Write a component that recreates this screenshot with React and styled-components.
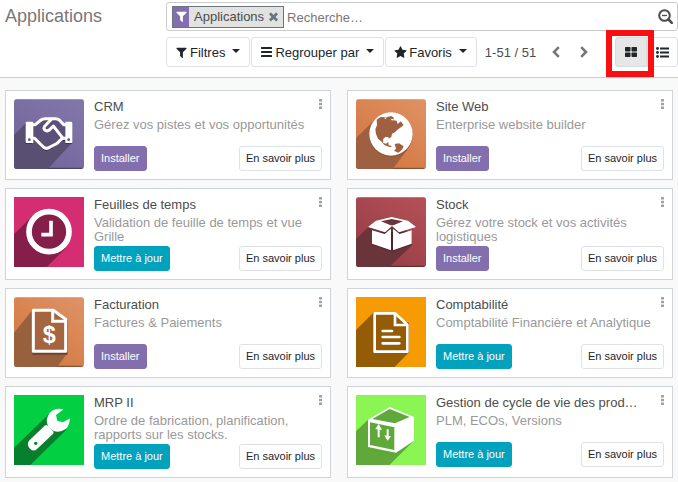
import React from "react";
import styled, { createGlobalStyle, css } from "styled-components";

const GlobalStyle = createGlobalStyle`
  *, *::before, *::after { box-sizing: border-box; }
  body {
    margin: 0;
    background: #f9f9f9;
    color: #4c4c4c;
    font-family: "Liberation Sans", Arial, sans-serif;
    font-size: 13px;
  }
  button, input { font: inherit; }
  svg { display: block; flex: none; }
`;

/* ---------- control panel ---------- */

const ControlPanel = styled.header`
  display: grid;
  grid-template-columns: 161px minmax(0, 1fr);
  row-gap: 6px;
  padding: 2px 0 10px 5px;
  background: #fff;
  border-bottom: 1px solid #cccccc;
`;

const PageTitle = styled.h1`
  margin: 0;
  font-size: 18px;
  line-height: 28px;
  font-weight: 400;
  color: #777777;
`;

const SearchBox = styled.div`
  display: flex;
  align-items: center;
  height: 29px;
  padding: 0 4px 0 5px;
  border: 1px solid #cccccc;
  border-radius: 3px;
`;

const Facet = styled.div`
  display: flex;
  align-items: center;
  flex: none;
  height: 22px;
  border: 1px solid #6c757d;
  background: #e2e2e0;
  line-height: 20px;
`;

const FacetIcon = styled.span`
  display: grid;
  place-items: center;
  width: 16px;
  height: 20px;
  margin-right: 5px;
  background: #846fae;
  color: #fff;
`;

const PlainButton = styled.button`
  display: grid;
  place-items: center;
  flex: none;
  padding: 0;
  border: 0;
  background: none;
  color: ${(p) => p.$color || "#4c4c4c"};
  cursor: pointer;
`;

const FacetRemove = styled(PlainButton)`
  width: 19px;
  height: 20px;
`;

const SearchInput = styled.input`
  flex: 1;
  min-width: 0;
  height: 26px;
  padding: 2px 3px 0;
  border: 0;
  outline: 0;
  background: transparent;
  &::placeholder { color: #777777; opacity: 1; }
`;

const Toolbar = styled.div`
  grid-column: 2;
  display: flex;
  align-items: center;
  gap: 1px;
  height: 30px;
`;

const MenuButton = styled.button`
  display: flex;
  align-items: center;
  gap: 2px;
  height: 30px;
  padding: 0 9px 0 8px;
  border: 1px solid #dee2e6;
  border-radius: 3px;
  background: #fff;
  color: #212529;
  white-space: nowrap;
  cursor: pointer;
`;

const Caret = styled.span`
  margin: 0 0 3px 5px;
  border: 4px solid transparent;
  border-top-color: #212529;
  border-bottom: 0;
`;

const Pager = styled.nav`
  display: flex;
  align-items: center;
  flex: none;
  margin-left: 7px;
`;

const PagerCount = styled.span`
  margin-right: 6px;
`;

const PagerButton = styled(PlainButton)`
  width: 28px;
  height: 28px;
`;

const ViewSwitch = styled.div`
  display: flex;
  flex: none;
  margin-left: auto;
`;

const Highlighted = styled.div`
  position: relative;
  &::after {
    content: "";
    position: absolute;
    inset: -7px -7px -10px -9px;
    border: 6px solid #f90f12;
    pointer-events: none;
  }
`;

const ViewButton = styled(PlainButton)`
  width: 31px;
  height: 30px;
  border: 1px solid #dee2e6;
  border-radius: 0 3px 3px 0;
  color: #212529;
  ${(p) => p.$active && css`
    width: 32px;
    border-radius: 3px 0 0 3px;
    background: #e6e6e6;
    border-color: #dadada;
  `}
`;

/* ---------- kanban ---------- */

const Kanban = styled.main`
  display: grid;
  grid-template-columns: repeat(2, minmax(0, 1fr));
  gap: 8px 16px;
  padding: 12px 5px 4px;
`;

const Card = styled.article`
  display: flex;
  align-items: flex-start;
  gap: 10px;
  padding: 8px;
  border: 1px solid #ced4da;
  background: #fff;
`;

const AppTile = styled.svg`
  width: 70px;
  height: 70px;
  border-radius: ${(p) => (p.$rounded ? "3px" : "0")};
`;

const CardBody = styled.div`
  flex: 1;
  min-width: 0;
`;

const CardText = styled.div`
  min-height: 47px;
  padding-bottom: 2px;
`;

const CardHead = styled.div`
  display: flex;
  justify-content: space-between;
  height: 15px;
  margin-bottom: 4px;
`;

const CardTitle = styled.h2`
  margin: 0;
  font-size: 13px;
  line-height: 15px;
  font-weight: 400;
  white-space: nowrap;
  overflow: hidden;
  text-overflow: ellipsis;
`;

const CardMenu = styled(PlainButton)`
  width: 3px;
  height: 10px;
`;

const Description = styled.p`
  margin: 0;
  padding-right: 12px;
  line-height: 14px;
  color: #999999;
`;

const Actions = styled.div`
  display: flex;
  justify-content: space-between;
`;

const tones = {
  install: ["#846fae", "#846fae", "#fff"],
  update: ["#00a2bd", "#00a2bd", "#fff"],
  plain: ["#fff", "#dee2e6", "#212529"],
};

const ActionButton = styled.button`
  height: 25px;
  padding: 0 6px 2px;
  border: 1px solid ${(p) => tones[p.$tone][1]};
  border-radius: 3px;
  background: ${(p) => tones[p.$tone][0]};
  color: ${(p) => tones[p.$tone][2]};
  font-size: 11px;
  white-space: nowrap;
  cursor: pointer;
`;

/* ---------- small icons ---------- */

const Glyph = ({ size = 13, children }) => (
  <svg width={size} height={size} viewBox="0 0 1792 1792" fill="currentColor" aria-hidden="true">
    {children}
  </svg>
);

const FilterIcon = () => (
  <Glyph>
    <path d="M1595 295q17 41-14 70l-493 493v742q0 42-39 59-13 5-25 5-27 0-45-19l-256-256q-19-19-19-45v-486l-493-493q-31-29-14-70 17-39 59-39h1280q42 0 59 39z" />
  </Glyph>
);
const StarIcon = () => (
  <Glyph>
    <path d="M1728 647q0 22-26 48l-363 354 86 500q1 7 1 20 0 21-10.500 35.500t-30.500 14.500q-19 0-40-12l-449-236-449 236q-22 12-40 12-21 0-31.500-14.500t-10.500-35.500q0-6 2-20l86-500-364-354q-25-27-25-48 0-37 56-46l502-73 225-455q19-41 49-41t49 41l225 455 502 73q56 9 56 46z" />
  </Glyph>
);
const TimesIcon = () => (
  <Glyph>
    <path d="M1490 1322q0 40-28 68l-136 136q-28 28-68 28t-68-28l-294-294-294 294q-28 28-68 28t-68-28l-136-136q-28-28-28-68t28-68l294-294-294-294q-28-28-28-68t28-68l136-136q28-28 68-28t68 28l294 294 294-294q28-28 68-28t68 28l136 136q28 28 28 68t-28 68l-294 294 294 294q28 28 28 68z" />
  </Glyph>
);
const BarsIcon = () => (
  <svg width="13" height="10" viewBox="-1 0 13 10" fill="currentColor" aria-hidden="true">
    <rect width="11" height="2" rx=".5" />
    <rect y="4" width="11" height="2" rx=".5" />
    <rect y="8" width="11" height="2" rx=".5" />
  </svg>
);
const ChevronIcon = ({ right }) => (
  <svg width="8" height="12" viewBox="0 0 8 12" fill="none" stroke="#777" strokeWidth="2.6" aria-hidden="true">
    <path d={right ? "M1.200 1.200 6 6 1.200 10.800" : "M6.800 1.200 2 6l4.800 4.800"} />
  </svg>
);
const ZoomOutIcon = () => (
  <svg width="15" height="15" viewBox="0 0 15 15" fill="none" stroke="currentColor" aria-hidden="true">
    <circle cx="6.500" cy="6.500" r="5.300" strokeWidth="2" />
    <path d="M4 6.500h5" strokeWidth="1.300" />
    <path d="m10.500 10.500 3.300 3.300" strokeWidth="2.600" strokeLinecap="round" />
  </svg>
);
const GridIcon = () => (
  <svg width="12" height="10" viewBox="0 0 12 10" fill="currentColor" aria-hidden="true">
    <rect width="5.500" height="4.500" rx=".8" />
    <rect x="6.500" width="5.500" height="4.500" rx=".8" />
    <rect y="5.500" width="5.500" height="4.500" rx=".8" />
    <rect x="6.500" y="5.500" width="5.500" height="4.500" rx=".8" />
  </svg>
);
const ListIcon = () => (
  <svg width="13" height="11" viewBox="0 0 13 11" fill="currentColor" aria-hidden="true">
    {[1.5, 5.5, 9.5].map((y) => (
      <g key={y}>
        <circle cx="1.500" cy={y} r="1.400" />
        <rect x="4" y={y - 1} width="9" height="2" />
      </g>
    ))}
  </svg>
);
const DotsIcon = () => (
  <svg width="3" height="10" viewBox="0 0 3 10" fill="#a0a0a0" aria-hidden="true">
    <rect width="3" height="2.600" rx=".5" />
    <rect y="3.700" width="3" height="2.600" rx=".5" />
    <rect y="7.400" width="3" height="2.600" rx=".5" />
  </svg>
);

/* ---------- application artwork, on a 210 unit square ---------- */

const Backdrop = ({ id, from, to }) => (
  <>
    <linearGradient id={id} x1="1" y1="0" x2="0.300" y2="1">
      <stop offset="0" stopColor={from} />
      <stop offset="1" stopColor={to} />
    </linearGradient>
    <rect width="210" height="210" fill={`url(#${id})`} />
    <path d="M0 208h210" stroke="#000" strokeOpacity=".35" strokeWidth="4" />
    <path d="M0 1h210" stroke="#fff" strokeOpacity=".25" strokeWidth="3" />
  </>
);

const artwork = {
  crm: (
    <>
      <Backdrop id="bg-crm" from="#8377aa" to="#71659b" />
      <path d="M36 72 0 108v102h101l72-77-26-60-50-14-44 18z" fill="#594f72" />
      <path d="M58 78 84 62h46l26 16v42l-42 29H96l-38-30z" fill="#5b5079" />
      <path d="M35 72h19v63H35zM154 72h19v63h-19z" fill="#3d3456" />
      <g fill="none" stroke="#3d3456" strokeWidth="9" strokeLinejoin="round">
        <path d="M56 121h8l26 27q8 6 16 0l40-27h10" />
      </g>
      <g fill="none" stroke="#fff" strokeWidth="9" strokeLinejoin="round" strokeLinecap="round">
        <path d="M56 77h8l17-14q5-4 12-4h31q7 0 12 4l13 14h8" />
        <path d="M56 118h6l26 26q10 8 20 0l20-10 17-16h11" />
        <path d="M113 60 92 82q-5 7 2 12 7 4 13-2l11-11 29 37" />
      </g>
      <path d="M38 68h16q4 0 4 4v60H39q-4 0-4-4V72q0-4 3-4zM154 68h17q4 0 4 4v56q0 4-4 4h-17z" fill="#fff" />
      <circle cx="46" cy="122" r="4" fill="#5b5079" />
      <circle cx="164" cy="122" r="4" fill="#5b5079" />
    </>
  ),
  web: (
    <>
      <Backdrop id="bg-web" from="#df9265" to="#d3763f" />
      <path d="M58 60 0 118v92h110l44-58z" fill="#9e6040" />
      <circle cx="105" cy="108" r="65" fill="#85492d" />
      <circle cx="105" cy="105" r="65" fill="#fff" />
      <path
        d="m62 62 12-8 16 1 16-4 8 5-3 8 11 1 3 10 9-8 9 11-10 8-9 6-7 8-9 4-2 10-8 5-1-5-9 0-7 7 1 11 8 2 7-5 1 10 10 3-5 3-17-6-9-11-11-9-6-14-2-14 5-13zM116 135l13-2 14 9-5 10-11 9-13-6 6-6z"
        fill="#9e6040"
      />
      <path d="m84 57 9-2-4 5zm20 4 8-2-3 6z" fill="#fff" />
    </>
  ),
  time: (
    <>
      <rect width="210" height="210" fill="#d52d72" />
      <path d="M56 56 0 112v98h98l58-57z" fill="#851e49" />
      <circle cx="105" cy="104" r="60" fill="#851e49" stroke="#fff" strokeWidth="17" />
      <path d="M111 71v42H82" fill="none" stroke="#fff" strokeWidth="11" />
    </>
  ),
  stock: (
    <>
      <Backdrop id="bg-stock" from="#b65158" to="#963d46" />
      <path d="M38 90 0 126v84h99l68-64-18-55z" fill="#69343a" />
      <path d="M48 105v38l57 20h6l56-20v-38z" fill="#53242b" />
      <path d="m60 72 47-12 49 12-46 20z" fill="#69343a" />
      <path d="m48 100 38 11 17-14h2v63l-57-20zM111 97h2l18 14 36-11v40l-56 20z" fill="#fff" />
      <path
        d="m60 71 47-11 49 11 24 19-51 16-21-19-21 19-51-16zm15 2 29 12h8l29-12-34-7z"
        fillRule="evenodd"
        fill="#fff"
      />
    </>
  ),
  invoice: (
    <>
      <Backdrop id="bg-invoice" from="#df9367" to="#d3773f" />
      <path d="M56 38 0 108v102h129l30-40V72l-42-34z" fill="#99603e" />
      <path d="M60 43h60l36 29v97H60z" fill="none" stroke="#73412a" strokeWidth="9" />
      <path d="M58 40h60l37 27v96H58z" fill="#a5663f" stroke="#fff" strokeWidth="9" strokeLinejoin="round" />
      <path d="M116 42v31h38" fill="none" stroke="#fff" strokeWidth="9" />
      <text x="106" y="137" textAnchor="middle" fontFamily="Liberation Sans" fontSize="70" fontWeight="700" fill="#fff">$</text>
    </>
  ),
  accounting: (
    <>
      <rect width="210" height="210" fill="#f79b04" />
      <path d="M54 45 0 99v111h116l43-44V77z" fill="#955c08" />
      <path d="M56 49h61l37 34v81H56z" fill="#955c08" stroke="#fff" strokeWidth="8" strokeLinejoin="round" />
      <path d="M117 50v34h35" fill="none" stroke="#fff" strokeWidth="8" />
      <path d="M80 102h28M80 120h50M80 139h50" stroke="#fff" strokeWidth="8" strokeLinecap="round" />
    </>
  ),
  mrp: (
    <>
      <rect width="210" height="210" fill="#02cf42" />
      <path d="M108 54 0 158v52h49l108-106z" fill="#06802c" />
      <path
        d="M149 43q-25-6-42 11-15 19-4 42l16 12q20 6 37-7 11-11 12-31l-21 12-17-5-4-17z"
        fill="#fff"
      />
      <path d="m45 137 47-45q5-4 9 0l16 16q4 4 0 9l-49 46q-9 8-20-2-11-12-3-24z" fill="#fff" />
      <circle cx="65" cy="145" r="5" fill="#06802c" />
    </>
  ),
  plm: (
    <>
      <rect width="210" height="210" fill="#8bf553" />
      <path d="M36 74 0 109v101h100l73-72z" fill="#60a83a" />
      <path d="m101 36 73 30v71l-54 36-84-17V74z" fill="#fff" />
      <path d="m101 42 60 24-44 19-68-13z" fill="#60a83a" />
      <path d="m42 82 73 15v68l-73-15z" fill="#60a83a" />
      <path d="M68 127v-28M95 103v28" stroke="#fff" strokeWidth="6" />
      <path d="m58 102 10-15 10 18zM85 121l20 3-10 13z" fill="#fff" />
    </>
  ),
};

const apps = [
  { art: "crm", name: "CRM", text: "Gérez vos pistes et vos opportunités", rounded: true },
  { art: "web", name: "Site Web", text: "Enterprise website builder", rounded: true },
  { art: "time", name: "Feuilles de temps", text: "Validation de feuille de temps et vue Grille", update: true },
  { art: "stock", name: "Stock", text: "Gérez votre stock et vos activités logistiques", rounded: true },
  { art: "invoice", name: "Facturation", text: "Factures & Paiements", rounded: true },
  { art: "accounting", name: "Comptabilité", text: "Comptabilité Financière et Analytique", update: true },
  { art: "mrp", name: "MRP II", text: "Ordre de fabrication, planification, rapports sur les stocks.", update: true },
  { art: "plm", name: "Gestion de cycle de vie des prod…", text: "PLM, ECOs, Versions", update: true },
];

const AppCard = ({ app }) => (
  <Card>
    <AppTile viewBox="0 0 210 210" $rounded={app.rounded} aria-hidden="true">
      {artwork[app.art]}
    </AppTile>
    <CardBody>
      <CardText>
        <CardHead>
          <CardTitle>{app.name}</CardTitle>
          <CardMenu type="button" aria-label={`Menu ${app.name}`}><DotsIcon /></CardMenu>
        </CardHead>
        <Description>{app.text}</Description>
      </CardText>
      <Actions>
        <ActionButton type="button" $tone={app.update ? "update" : "install"}>
          {app.update ? "Mettre à jour" : "Installer"}
        </ActionButton>
        <ActionButton type="button" $tone="plain">En savoir plus</ActionButton>
      </Actions>
    </CardBody>
  </Card>
);

export default function App() {
  return (
    <>
      <GlobalStyle />
      <ControlPanel>
        <PageTitle>Applications</PageTitle>
        <SearchBox role="search">
          <Facet>
            <FacetIcon><FilterIcon /></FacetIcon>
            <span>Applications</span>
            <FacetRemove type="button" aria-label="Supprimer" $color="#6c757d"><TimesIcon /></FacetRemove>
          </Facet>
          <SearchInput type="text" aria-label="Recherche" placeholder="Recherche…" />
          <PlainButton type="button" aria-label="Options de recherche"><ZoomOutIcon /></PlainButton>
        </SearchBox>
        <Toolbar>
          <MenuButton type="button"><FilterIcon />Filtres<Caret /></MenuButton>
          <MenuButton type="button"><BarsIcon />Regrouper par<Caret /></MenuButton>
          <MenuButton type="button"><StarIcon />Favoris<Caret /></MenuButton>
          <Pager aria-label="Pagination">
            <PagerCount>1-51 / 51</PagerCount>
            <PagerButton type="button" aria-label="Précédent"><ChevronIcon /></PagerButton>
            <PagerButton type="button" aria-label="Suivant"><ChevronIcon right /></PagerButton>
          </Pager>
          <ViewSwitch>
            <Highlighted>
              <ViewButton type="button" aria-label="Kanban" $active><GridIcon /></ViewButton>
            </Highlighted>
            <ViewButton type="button" aria-label="Liste"><ListIcon /></ViewButton>
          </ViewSwitch>
        </Toolbar>
      </ControlPanel>
      <Kanban>
        {apps.map((app) => <AppCard key={app.art} app={app} />)}
      </Kanban>
    </>
  );
}
